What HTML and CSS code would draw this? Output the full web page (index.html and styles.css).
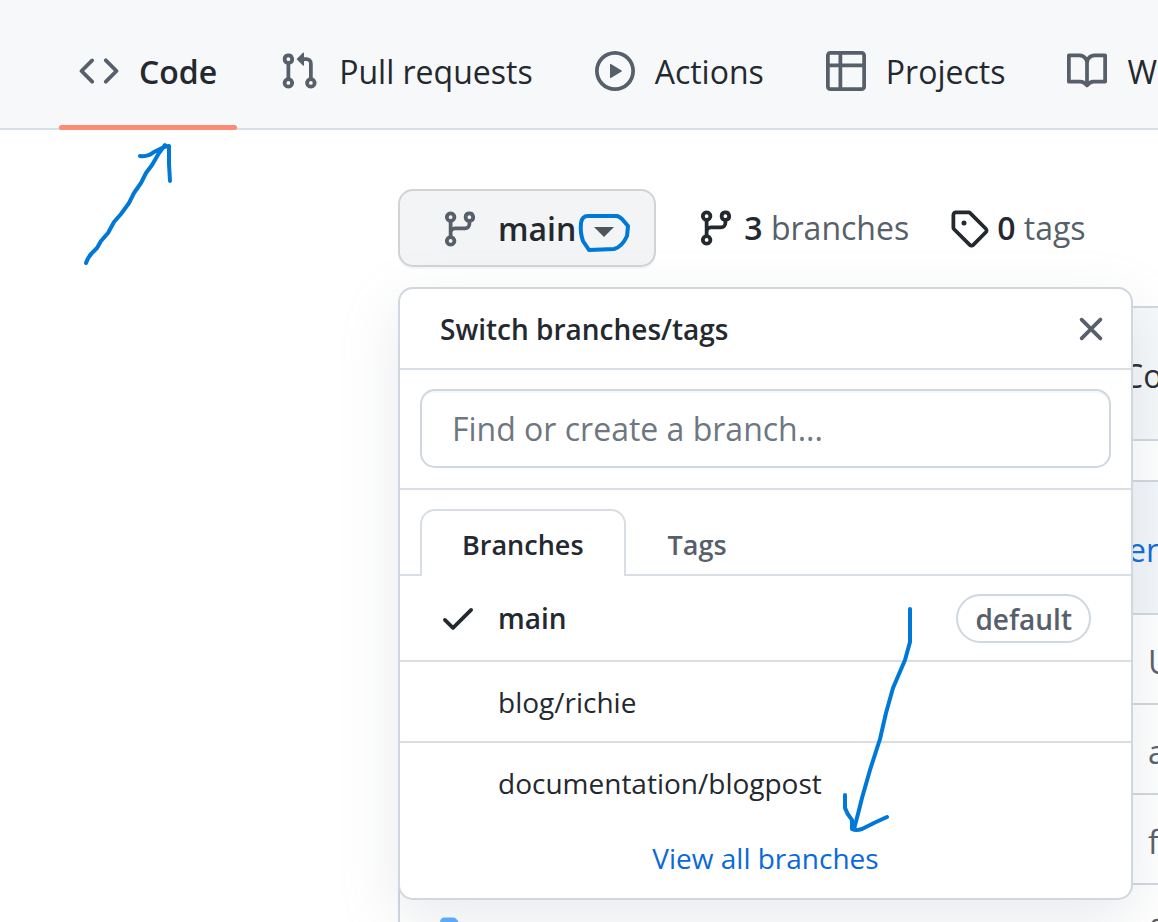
FILE: index.html
```html
<!DOCTYPE html>
<html lang="en">
<head>
<meta charset="utf-8">
<title>Branches</title>
<link rel="stylesheet" href="styles.css">
</head>
<body>
<svg class="sprite" aria-hidden="true">
  <symbol id="branch" viewBox="0 0 16 16"><path fill-rule="evenodd" d="M11.75 2.5a.75.75 0 100 1.5.75.75 0 000-1.5zm-2.25.75a2.25 2.25 0 113 2.122V6A2.5 2.5 0 0110 8.5H6a1 1 0 00-1 1v1.128a2.251 2.251 0 11-1.5 0V5.372a2.25 2.25 0 111.5 0v1.836A2.492 2.492 0 016 7h4a1 1 0 001-1v-.628A2.25 2.25 0 019.5 3.25zM4.25 12a.75.75 0 100 1.5.75.75 0 000-1.5zM3.5 3.25a.75.75 0 111.5 0 .75.75 0 01-1.5 0z"/></symbol>
  <symbol id="folder" viewBox="0 0 16 16"><path d="M1.75 1A1.75 1.75 0 000 2.75v10.5C0 14.216.784 15 1.75 15h12.5A1.75 1.75 0 0016 13.25v-8.5A1.75 1.75 0 0014.25 3h-6.5a.25.25 0 01-.2-.1l-.9-1.2c-.33-.44-.85-.7-1.4-.7h-3.5z"/></symbol>
</svg>
<div class="page">
  <nav class="repo-nav" aria-label="Repository">
    <a class="nav-tab selected" href="#code"><svg class="icon" viewBox="0 0 16 16"><path d="M4.72 3.22a.75.75 0 011.06 1.06L2.06 8l3.72 3.72a.75.75 0 11-1.06 1.06L.47 8.53a.75.75 0 010-1.06l4.25-4.25zm6.56 0a.75.75 0 10-1.06 1.06L13.94 8l-3.72 3.72a.75.75 0 101.06 1.06l4.25-4.25a.75.75 0 000-1.06l-4.25-4.25z"/></svg><span>Code</span></a>
    <a class="nav-tab" href="#pulls"><svg class="icon" viewBox="0 0 16 16"><path fill-rule="evenodd" d="M7.177 3.073L9.573.677A.25.25 0 0110 .854v4.792a.25.25 0 01-.427.177L7.177 3.427a.25.25 0 010-.354zM3.75 2.5a.75.75 0 100 1.5.75.75 0 000-1.5zm-2.25.75a2.25 2.25 0 113 2.122v5.256a2.251 2.251 0 11-1.5 0V5.372A2.25 2.25 0 011.5 3.25zM11 2.5h-1V4h1a1 1 0 011 1v5.628a2.251 2.251 0 101.5 0V5A2.5 2.5 0 0011 2.5zm1 10.25a.75.75 0 111.5 0 .75.75 0 01-1.5 0zM3.75 12a.75.75 0 100 1.5.75.75 0 000-1.5z"/></svg><span>Pull requests</span></a>
    <a class="nav-tab" href="#actions"><svg class="icon" viewBox="0 0 16 16"><path d="M1.5 8a6.5 6.5 0 1113 0 6.5 6.5 0 01-13 0zM8 0a8 8 0 100 16A8 8 0 008 0zM6.379 5.227A.25.25 0 006 5.442v5.117a.25.25 0 00.379.214l4.264-2.559a.25.25 0 000-.428L6.379 5.227z"/></svg><span>Actions</span></a>
    <a class="nav-tab" href="#projects"><svg class="icon" viewBox="0 0 16 16"><path d="M0 1.75C0 .784.784 0 1.75 0h12.5C15.216 0 16 .784 16 1.75v12.5A1.75 1.75 0 0114.25 16H1.75A1.75 1.75 0 010 14.25V1.75zM1.5 6.5v7.75c0 .138.112.25.25.25H5v-8H1.5zM5 5V1.5H1.75a.25.25 0 00-.25.25V5H5zm1.5 1.5v8h7.75a.25.25 0 00.25-.25V6.5h-8zm8-1.5V1.75a.25.25 0 00-.25-.25H6.5V5h8z" fill-rule="evenodd"/></svg><span>Projects</span></a>
    <a class="nav-tab" href="#wiki"><svg class="icon" viewBox="0 0 16 16"><path fill-rule="evenodd" d="M0 1.75A.75.75 0 01.75 1h4.253c1.227 0 2.317.59 3 1.501A3.744 3.744 0 0111.006 1h4.245a.75.75 0 01.75.75v10.5a.75.75 0 01-.75.75h-4.507a2.25 2.25 0 00-1.591.659l-.622.621a.75.75 0 01-1.06 0l-.622-.621A2.25 2.25 0 005.258 13H.75a.75.75 0 01-.75-.75V1.75zm8.755 3a2.25 2.25 0 012.25-2.25H14.5v9h-3.757c-.71 0-1.4.201-1.992.572l.004-7.322zm-1.504 7.324l.004-5.073-.002-2.253A2.25 2.25 0 005.003 2.5H1.5v9h3.757a3.75 3.75 0 011.994.574z"/></svg><span>Wiki</span></a>
  </nav>

  <main class="content">
    <div class="toolbar">
      <div class="branch-picker">
        <button class="branch-button" type="button" aria-expanded="true"><svg class="icon"><use href="#branch"/></svg><span>main</span><i class="caret"></i></button>
        <section class="popover" aria-label="Switch branches/tags">
          <header class="popover-head">
            <h2>Switch branches/tags</h2>
            <button class="close" type="button" aria-label="Close"><svg class="icon" viewBox="0 0 16 16"><path d="M3.72 3.72a.75.75 0 011.06 0L8 6.94l3.22-3.22a.75.75 0 111.06 1.06L9.06 8l3.22 3.22a.75.75 0 11-1.06 1.06L8 9.06l-3.22 3.22a.75.75 0 01-1.06-1.06L6.94 8 3.72 4.78a.75.75 0 010-1.06z"/></svg></button>
          </header>
          <div class="filter"><input type="text" placeholder="Find or create a branch..." aria-label="Find or create a branch"></div>
          <div class="tabs" role="tablist">
            <button class="tab active" type="button" role="tab" aria-selected="true">Branches</button>
            <button class="tab" type="button" role="tab" aria-selected="false">Tags</button>
          </div>
          <a class="item current" href="#main"><svg class="icon" viewBox="0 0 16 16"><path d="M13.78 4.22a.75.75 0 010 1.06l-7.25 7.25a.75.75 0 01-1.06 0L2.22 9.28a.75.75 0 011.06-1.06L6 10.94l6.72-6.72a.75.75 0 011.06 0z"/></svg><span>main</span><span class="label">default</span></a>
          <a class="item" href="#richie"><span>blog/richie</span></a>
          <a class="item" href="#blogpost"><span>documentation/blogpost</span></a>
          <a class="view-all" href="#branches">View all branches</a>
        </section>
      </div>
      <a class="stat" href="#branches"><svg class="icon"><use href="#branch"/></svg><span><strong>3</strong> branches</span></a>
      <a class="stat" href="#tags"><svg class="icon" viewBox="0 0 16 16"><path fill-rule="evenodd" d="M2.5 7.775V2.75a.25.25 0 01.25-.25h5.025a.25.25 0 01.177.073l6.25 6.25a.25.25 0 010 .354l-5.025 5.025a.25.25 0 01-.354 0l-6.25-6.25a.25.25 0 01-.073-.177zm-1.5 0V2.75C1 1.784 1.784 1 2.75 1h5.025c.464 0 .91.184 1.238.513l6.25 6.25a1.75 1.75 0 010 2.474l-5.026 5.026a1.75 1.75 0 01-2.474 0l-6.25-6.25A1.75 1.75 0 011 7.775zM6 5a1 1 0 100 2 1 1 0 000-2z"/></svg><span><strong>0</strong> tags</span></a>
    </div>

    <div class="box notice">Co</div>
    <div class="box">
      <div class="commit"><a href="#commit">en</a></div>
      <div class="file"><svg class="icon"><use href="#folder"/></svg><span>U</span></div>
      <div class="file"><svg class="icon"><use href="#folder"/></svg><span>a</span></div>
      <div class="file"><svg class="icon"><use href="#folder"/></svg><span>f</span></div>
      <div class="file"><svg class="icon"><use href="#folder"/></svg><span>f</span></div>
    </div>
  </main>

  <svg class="ink" viewBox="0 0 1158 922" aria-hidden="true">
    <path d="M86 263Q88 257 92 253L97 248 101 241 108 233 114 222 121 214 129 203 134 193 141 183 146 173 152 165 159 153 165 145M140 156Q148 157 154 152L164 147 169 146 169 164 170 181"/>
    <path d="M581 223Q582 216 588 216H617Q620 217 622 219L628 226 627 236Q622 247 614 249L589 250 583 241Q580 233 581 223Z"/>
    <path d="M910 609V642L905 660 893 688 886 713 880 739 870 770 862 798 858 814 854 829M845 795V808Q847 814 852 820L852 829Q856 831 862 829L876 822 887 817"/>
  </svg>
</div>
</body>
</html>
```
FILE: styles.css
```css
* { box-sizing: border-box; }
body {
  margin: 0;
  background: #fff;
  color: #24292f;
  font: 32px/50px "Open Sans", "Noto Sans", sans-serif;
}
a { color: inherit; text-decoration: none; }
button, input { font: inherit; color: inherit; }
.sprite { display: none; }
.page { position: relative; height: 100vh; overflow: hidden; }
.icon { width: 40px; height: 40px; flex: none; fill: #57606a; }

.repo-nav {
  display: flex;
  gap: 22px;
  padding: 14px 0 0 59px;
  background: #f6f8fa;
  border-bottom: 2px solid #d8dee4;
}
.nav-tab {
  position: relative;
  display: flex;
  flex: none;
  align-items: center;
  gap: 20px;
  height: 114px;
  padding: 0 20px;
  white-space: nowrap;
}
.nav-tab span { padding-top: 2px; }
.selected { font-weight: 600; }
.selected::after {
  content: "";
  position: absolute;
  inset: auto 0 -2px;
  height: 5px;
  border-radius: 3px;
  background: #fd8c73;
}

.content { padding: 59px 0 0 398px; }
.toolbar { display: flex; align-items: center; gap: 40px; margin-bottom: 39px; }
.branch-picker { position: relative; }
.branch-button {
  display: flex;
  align-items: center;
  gap: 18px;
  height: 78px;
  padding: 2px 40px 0;
  border: 2px solid #d1d3d5;
  border-radius: 15px;
  background: #f3f4f6;
  box-shadow: 0 2px 0 rgba(27, 31, 36, .04);
  font-weight: 600;
}
.caret {
  margin-top: 6px;
  border: 10px solid transparent;
  border-top-color: #50555b;
  border-bottom: 0;
}
.stat { display: flex; align-items: center; gap: 8px; color: #57606a; white-space: nowrap; }
.stat .icon { fill: #24292f; }
.stat strong { color: #24292f; font-weight: 600; }

.popover {
  position: absolute;
  top: 98px;
  left: 0;
  z-index: 1;
  width: 735px;
  padding-bottom: 8px;
  border: 2px solid #d0d7de;
  border-radius: 15px;
  background: #fff;
  box-shadow: 0 20px 60px rgba(140, 149, 159, .2);
  font-size: 28px;
  line-height: 40px;
}
.popover-head {
  display: flex;
  align-items: center;
  justify-content: space-between;
  height: 81px;
  padding: 0 20px 0 40px;
  border-bottom: 2px solid #d8dee4;
}
.popover-head h2 { margin: 0; font-size: 28px; font-weight: 600; }
.close { display: flex; padding: 0; border: 0; background: none; }
.filter { padding: 19px 20px 20px; border-bottom: 2px solid #d8dee4; }
.filter input {
  display: block;
  width: 100%;
  height: 79px;
  padding: 0 30px;
  border: 2px solid #d0d7de;
  border-radius: 15px;
  background: #fff;
  box-shadow: inset 0 2px 0 rgba(208, 215, 222, .2);
  font-size: 32px;
}
.filter input::placeholder { color: #6e7781; opacity: 1; }
.tabs {
  display: flex;
  margin-top: 19px;
  padding: 0 20px;
  box-shadow: inset 0 -2px #d8dee4;
}
.tab {
  height: 67px;
  padding: 3px 40px 0;
  border: 2px solid transparent;
  border-bottom: 0;
  background: none;
  color: #57606a;
  font-size: 27px;
  font-weight: 600;
}
.tab.active {
  border-color: #d8dee4;
  border-radius: 15px 15px 0 0;
  background: #fff;
  color: #24292f;
}
.item {
  display: flex;
  align-items: center;
  gap: 20px;
  height: 81px;
  padding: 0 40px 0 98px;
}
.item + .item { border-top: 2px solid #d8dee4; }
.item.current { height: 84px; padding-left: 38px; font-weight: 600; }
.current .icon { fill: #24292f; }
.label {
  margin-left: auto;
  padding: 3px 17px 2px;
  border: 2px solid #d0d7de;
  border-radius: 25px;
  color: #57606a;
}
.view-all { display: block; padding: 16px 0 12px; color: #0969da; text-align: center; }

.box { border: 2px solid #d0d7de; border-right: 0; }
.notice { height: 135px; margin-bottom: 39px; padding: 43px 0 0 723px; background: #f6f8fa; }
.commit { height: 131px; padding: 43px 0 0 728px; background: #f3f6fa; color: #0969da; }
.file {
  display: grid;
  grid-template-columns: 708px 1fr;
  height: 90px;
  padding: 22px 0 0 40px;
  border-top: 2px solid #d0d7de;
  color: #57606a;
}
.file .icon { margin-top: 8px; fill: #54aeff; }

.ink {
  position: absolute;
  top: 0;
  left: 0;
  z-index: 2;
  width: 1158px;
  height: 922px;
  fill: none;
  stroke: #0078d7;
  stroke-width: 4;
  stroke-linecap: round;
  stroke-linejoin: round;
  pointer-events: none;
}
```
